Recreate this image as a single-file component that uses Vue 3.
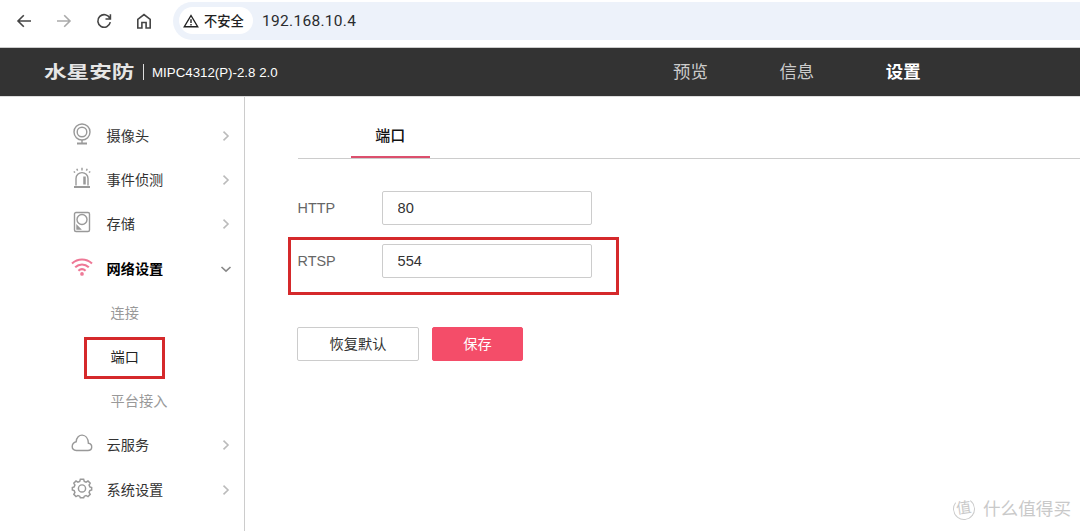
<template>
  <div class="page">
    <div class="browser-bar">
      <svg class="nav-icon" viewBox="0 0 20 20"><path d="M17 10H4M9.8 4.2 4 10l5.8 5.8" /></svg>
      <svg class="nav-icon disabled" viewBox="0 0 20 20"><path d="M3 10h13M10.2 4.2 16 10l-5.8 5.8" /></svg>
      <svg class="nav-icon" viewBox="0 0 20 20">
        <path d="M15.8 7.2A6.3 6.3 0 1 0 16.3 11.2M16.4 3.2v4.8h-4.9" />
      </svg>
      <svg class="nav-icon" viewBox="0 0 20 20">
        <path d="M3.8 8.3 10 3.5l6.2 4.8V17h-4.1v-5.5H7.9V17H3.8z" />
      </svg>
      <div class="address">
        <div class="security">
          <svg class="warning" viewBox="0 0 16 14">
            <path d="M8 1.500 14.700 12.700H1.300zM8 5.300v3.600M8 10.100v1.300" />
          </svg>
          <span>不安全</span>
        </div>
        <span class="url">192.168.10.4</span>
      </div>
    </div>

    <header class="header">
      <span class="logo">水星安防</span>
      <span class="divider"></span>
      <span class="model">MIPC4312(P)-2.8 2.0</span>
      <nav class="top-nav">
        <a v-for="item in topNav" :key="item" :class="{ active: item === '设置' }">{{ item }}</a>
      </nav>
    </header>

    <div class="body">
      <aside class="sidebar">
        <template v-for="item in menu" :key="item.label">
          <div :class="['menu-item', { open: item.children }]">
            <svg class="menu-icon" viewBox="0 0 22 22">
              <template v-if="item.icon === 'camera'">
                <circle cx="11" cy="9" r="8" />
                <circle cx="11" cy="9" r="4.8" />
                <path d="M11 17v3" />
                <path class="base" d="M6 20.5h10" />
              </template>
              <template v-else-if="item.icon === 'alarm'">
                <path d="M5 18.500V11.600a6 6 0 0 1 12 0V18.500M11 .8v2.600M5.800 1.800l.8 1.800M16.200 1.800l-.8 1.800M2.700 4.500l1.400 1M19.300 4.500l-1.400 1" />
                <path class="base" d="M3 20h16" />
                <path class="thick" d="M13.500 9.500v8" />
              </template>
              <template v-else-if="item.icon === 'disk'">
                <rect x="3.500" y="1.500" width="15" height="19" rx="1.500" />
                <circle cx="11" cy="8.500" r="5" />
                <path class="solid" d="M6 14.800 9.200 18H6z" />
              </template>
              <template v-else-if="item.icon === 'wifi'">
                <path d="M1 7.500c5.700-5.300 14.300-5.300 20 0M4.200 11.300c4-3.800 9.600-3.800 13.600 0M7.400 14.800c2.200-2.100 5-2.100 7.200 0" />
                <circle class="solid" cx="11" cy="17.900" r=".8" />
              </template>
              <template v-else-if="item.icon === 'cloud'">
                <path d="M5.400 18.500h11.500c5 0 5-6.600.5-7.200C16.900.300 5.500.900 5.200 9.800.1 11.100-.4 18 5.400 18.500z" />
              </template>
              <g v-else class="gear">
                <path d="M9.200 1.500h3.600l.7 2.300 1.900.8 2.100-1.200 2.400 2.400-1.200 2.100.8 1.900 2 .6v2.800l-2 .7-.8 1.900 1.200 2.100-2.400 2.400-2.100-1.200-1.900.8-.7 1.700H9.200l-.7-1.700-1.900-.8-2.100 1.200-2.400-2.400 1.200-2.100-.8-1.900-2-.7v-2.800l2-.6.8-1.900-1.200-2.100 2.400-2.400 2.100 1.200 1.900-.8z" />
                <circle cx="11" cy="11.500" r="3.900" />
              </g>
            </svg>
            <span class="menu-label">{{ item.label }}</span>
            <svg class="arrow" viewBox="0 0 12 12">
              <path v-if="item.children" d="M1.500 4 6 8.200 10.500 4" />
              <path v-else d="M3.500 1.700 8 6l-4.500 4.300" />
            </svg>
          </div>
          <div
            v-for="child in item.children"
            :key="child"
            :class="['sub-item', { current: child === '端口' }]"
          >
            {{ child }}
          </div>
        </template>
      </aside>

      <main class="content">
        <div class="tabs">
          <div class="tab">端口</div>
        </div>
        <div v-for="field in fields" :key="field.label" :class="['field', { marked: field.marked }]">
          <label :for="field.label">{{ field.label }}</label>
          <input :id="field.label" v-model="field.value" type="text" />
        </div>
        <div class="actions">
          <button class="reset">恢复默认</button>
          <button class="save">保存</button>
        </div>
      </main>
    </div>

    <div class="watermark">
      <span class="badge">值</span>
      <span>什么值得买</span>
    </div>
  </div>
</template>

<script setup>
import { ref } from 'vue';

const topNav = ['预览', '信息', '设置'];

const menu = [
  { label: '摄像头', icon: 'camera' },
  { label: '事件侦测', icon: 'alarm' },
  { label: '存储', icon: 'disk' },
  { label: '网络设置', icon: 'wifi', children: ['连接', '端口', '平台接入'] },
  { label: '云服务', icon: 'cloud' },
  { label: '系统设置', icon: 'gear' }
];

const fields = ref([
  { label: 'HTTP', value: '80' },
  { label: 'RTSP', value: '554', marked: true }
]);
</script>

<style>
body {
  background: #fff;
  overflow: hidden;
}
</style>

<style scoped>
.page {
  position: relative;
  display: flex;
  flex-direction: column;
  width: 1080px;
  height: 531px;
  overflow: hidden;
  background: #fff;
  color: #333;
  font-family: "Liberation Sans", "Noto Sans CJK SC", sans-serif;
  font-size: 14.2px;
}

svg {
  flex: none;
  fill: none;
  stroke: currentColor;
}

/* Browser bar */
.browser-bar {
  display: flex;
  align-items: center;
  box-sizing: border-box;
  height: 48px;
  padding: 0 0 6px 14px;
  border-bottom: 1px solid #ccc;
}

.nav-icon {
  width: 20px;
  height: 20px;
  margin-right: 20px;
  color: #454545;
  stroke-width: 1.6;
}

.nav-icon.disabled {
  color: #aaa;
}

.address {
  display: flex;
  flex: 1;
  align-items: center;
  height: 38px;
  margin-left: -1px;
  padding-left: 6px;
  border-radius: 19px 0 0 19px;
  background: #edf2fa;
}

.security {
  display: flex;
  align-items: center;
  box-sizing: border-box;
  width: 74px;
  height: 27px;
  padding-left: 4px;
  border-radius: 14px;
  background: #fff;
  color: #222;
  font-size: 13.3px;
  font-weight: 500;
  white-space: nowrap;
}

.warning {
  width: 16px;
  height: 14px;
  margin-right: 5px;
  stroke-width: 1.4;
}

.url {
  margin-left: 9px;
  color: #2a2b2e;
  font-family: Roboto, sans-serif;
  font-size: 15.5px;
  letter-spacing: 0.3px;
}

/* Device header */
.header {
  display: flex;
  align-items: center;
  flex: none;
  height: 48px;
  padding-left: 44px;
  background: #333;
  color: #fff;
}

.logo {
  width: 91px;
  color: #e6e6e6;
  font-size: 17.5px;
  font-weight: 700;
  line-height: 24px;
  white-space: nowrap;
  transform: scaleX(1.29);
  transform-origin: left;
}

.divider {
  width: 1px;
  height: 16px;
  margin: 0 9px 0 8px;
  background: #ddd;
}

.model {
  width: 521px;
  margin-left: -1px;
  font-size: 13.3px;
}

.top-nav {
  display: flex;
  gap: 71.6px;
  padding-bottom: 3px;
  color: #ccc;
  font-size: 17.4px;
}

.top-nav .active {
  color: #fff;
  font-weight: 700;
}

/* Sidebar */
.body {
  display: flex;
  flex: 1;
  border-top: 1px solid #ddd;
}

.sidebar {
  box-sizing: border-box;
  width: 245px;
  padding-top: 17px;
  border-right: 1px solid #ccc;
}

.menu-item {
  display: flex;
  align-items: center;
  height: 44.2px;
  padding: 0 12px 0 71px;
}

.menu-icon {
  width: 22px;
  height: 22px;
  margin: -4px 13.5px 0 0;
  color: #999;
  stroke-width: 1.4;
}

.menu-icon .solid {
  fill: currentColor;
}

.menu-icon .base {
  stroke-width: 2;
}

.menu-icon .thick {
  stroke-width: 2.5;
}

.menu-icon .gear {
  stroke-width: 1.6;
  transform: scale(0.92);
  transform-origin: 11px 11px;
}

.menu-label {
  flex: 1;
  padding-bottom: 2px;
}

.arrow {
  width: 12px;
  height: 12px;
  color: #bbb;
  stroke-width: 1.6;
}

.open {
  color: #000;
  font-weight: 700;
}

.open .menu-icon {
  color: #ee7896;
  stroke-width: 2.1;
}

.open .arrow {
  color: #888;
}

.sub-item {
  position: relative;
  height: 44.2px;
  padding-left: 110.6px;
  color: #999;
  line-height: 44.2px;
}

.sub-item.current {
  color: #222;
}

.sub-item.current::after {
  content: '';
  position: absolute;
  top: 2px;
  left: 84px;
  width: 75px;
  height: 36px;
  border: 3px solid #d5292b;
}

/* Content */
.content {
  flex: 1;
  padding: 17px 0 0 52.6px;
}

.tabs {
  height: 44px;
  margin-bottom: 32px;
  padding-left: 53px;
  border-bottom: 1px solid #ccc;
}

.tab {
  box-sizing: border-box;
  width: 79.4px;
  height: 44px;
  border-bottom: 2px solid #dc4f6d;
  color: #111;
  font-size: 15px;
  font-weight: 500;
  line-height: 44px;
  text-align: center;
}

.field {
  position: relative;
  display: flex;
  align-items: center;
  height: 34px;
  margin-bottom: 19px;
}

.field label {
  width: 84px;
  color: #666;
  font-size: 14.4px;
}

.field input {
  box-sizing: border-box;
  width: 210px;
  height: 34px;
  padding: 0 15px;
  border: 1px solid #ccc;
  border-radius: 2px;
  outline: none;
  color: #333;
  font-family: inherit;
  font-size: 14.6px;
}

.field.marked::after {
  content: '';
  position: absolute;
  top: -7px;
  left: -10px;
  width: 325px;
  height: 52px;
  border: 3px solid #d5292b;
}

.actions {
  display: flex;
  gap: 13px;
  margin-left: -0.6px;
  padding-top: 30px;
}

.actions button {
  box-sizing: border-box;
  height: 34px;
  padding: 0 0 2px;
  border: 1px solid #ccc;
  border-radius: 2px;
  font-family: inherit;
  font-size: 14.2px;
}

.reset {
  width: 122px;
  background: #fff;
  color: #333;
}

.actions .save {
  width: 91px;
  border-color: #f44d69;
  background: #f44d69;
  color: #fff;
}

.watermark {
  position: absolute;
  right: 9px;
  bottom: 10px;
  display: flex;
  align-items: center;
  gap: 8px;
  color: #c9c9c9;
  font-size: 17.6px;
  line-height: 24px;
}

.badge {
  box-sizing: border-box;
  width: 22px;
  height: 22px;
  border: 1px solid #ccc;
  border-top-color: transparent;
  border-radius: 50%;
  font-size: 15px;
  line-height: 18px;
  text-align: center;
  transform: rotate(-8deg);
}
</style>
